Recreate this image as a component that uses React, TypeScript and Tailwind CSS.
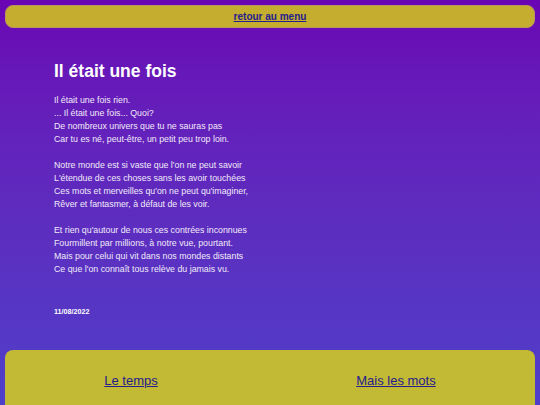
export default function App() {
  const stanzas = [
    [
      "Il était une fois rien.",
      "... Il était une fois... Quoi?",
      "De nombreux univers que tu ne sauras pas",
      "Car tu es né, peut-être, un petit peu trop loin.",
    ],
    [
      "Notre monde est si vaste que l'on ne peut savoir",
      "L'étendue de ces choses sans les avoir touchées",
      "Ces mots et merveilles qu'on ne peut qu'imaginer,",
      "Rêver et fantasmer, à défaut de les voir.",
    ],
    [
      "Et rien qu'autour de nous ces contrées inconnues",
      "Fourmillent par millions, à notre vue, pourtant.",
      "Mais pour celui qui vit dans nos mondes distants",
      "Ce que l'on connaît tous relève du jamais vu.",
    ],
  ];

  return (
    <div className="h-[405px] overflow-hidden bg-gradient-to-b from-[#6a04b4] to-[#4e3fc9] font-['Liberation_Sans',Arial,sans-serif] text-white">
      <div className="pt-[5px] px-[5px]">
        <div className="h-[23px] rounded-[8px] border border-[#b9965a] bg-[#c5ad30] flex items-center justify-center">
          <a href="#" className="text-[10px] font-bold text-[#26208c] underline">
            retour au menu
          </a>
        </div>
      </div>

      <main className="pl-[54px] pt-[33px]">
        <h1 className="text-[17.5px] leading-[20px] font-bold">Il était une fois</h1>

        <div className="mt-[13px] text-[8.8px] leading-[13px] text-[#f1eaf8]">
          {stanzas.map((lines, i) => (
            <p key={i} className={i > 0 ? "mt-[13px]" : ""}>
              {lines.map((line) => (
                <span key={line} className="block">
                  {line}
                </span>
              ))}
            </p>
          ))}
        </div>

        <p className="mt-[31px] text-[7.2px] leading-[9px] font-bold">11/08/2022</p>
      </main>

      <div className="px-[5px] mt-[34px]">
        <footer className="h-[80px] rounded-[8px] bg-[#c2b934] flex justify-around pt-[23px]">
          <a href="#" className="h-fit text-[13px] leading-[15px] text-[#26208c] underline">
            Le temps
          </a>
          <a href="#" className="h-fit text-[13px] leading-[15px] text-[#26208c] underline">
            Mais les mots
          </a>
        </footer>
      </div>
    </div>
  );
}
